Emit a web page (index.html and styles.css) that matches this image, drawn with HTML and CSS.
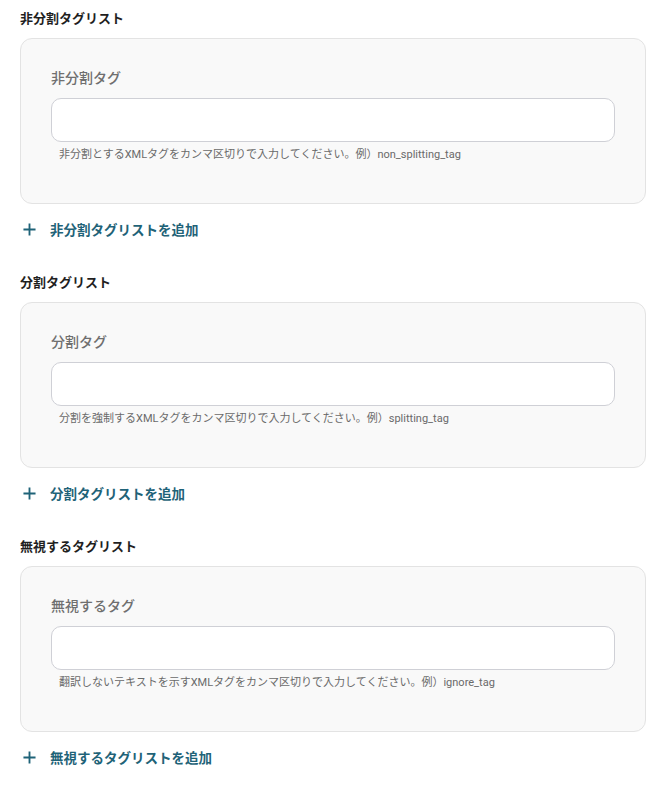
FILE: index.html
```html
<!DOCTYPE html>
<html lang="ja">
<head>
<meta charset="utf-8">
<title>タグリスト設定</title>
<link rel="stylesheet" href="styles.css">
</head>
<body>
<main class="page">
  <section class="group">
    <h2 class="group-title">非分割タグリスト</h2>
    <div class="card">
      <label class="field-label">非分割タグ</label>
      <input class="field-input" type="text">
      <p class="field-help">非分割とするXMLタグをカンマ区切りで入力してください。例）non_splitting_tag</p>
    </div>
    <button class="add-btn" type="button">
      <svg class="add-icon" viewBox="0 0 14 14" width="14" height="14"><path d="M7 0.5v13M0.5 7h13" stroke="currentColor" stroke-width="2" fill="none"/></svg>
      <span>非分割タグリストを追加</span>
    </button>
  </section>

  <section class="group">
    <h2 class="group-title">分割タグリスト</h2>
    <div class="card">
      <label class="field-label">分割タグ</label>
      <input class="field-input" type="text">
      <p class="field-help">分割を強制するXMLタグをカンマ区切りで入力してください。例）splitting_tag</p>
    </div>
    <button class="add-btn" type="button">
      <svg class="add-icon" viewBox="0 0 14 14" width="14" height="14"><path d="M7 0.5v13M0.5 7h13" stroke="currentColor" stroke-width="2" fill="none"/></svg>
      <span>分割タグリストを追加</span>
    </button>
  </section>

  <section class="group">
    <h2 class="group-title">無視するタグリスト</h2>
    <div class="card">
      <label class="field-label">無視するタグ</label>
      <input class="field-input" type="text">
      <p class="field-help">翻訳しないテキストを示すXMLタグをカンマ区切りで入力してください。例）ignore_tag</p>
    </div>
    <button class="add-btn" type="button">
      <svg class="add-icon" viewBox="0 0 14 14" width="14" height="14"><path d="M7 0.5v13M0.5 7h13" stroke="currentColor" stroke-width="2" fill="none"/></svg>
      <span>無視するタグリストを追加</span>
    </button>
  </section>
</main>
</body>
</html>
```

FILE: styles.css
```css
* {
  box-sizing: border-box;
}

html, body {
  margin: 0;
  padding: 0;
  background: #ffffff;
}

body {
  font-family: Roboto, "Noto Sans CJK JP", sans-serif;
  color: #222222;
}

.page {
  padding: 9px 16px 0 20px;
  display: flex;
  flex-direction: column;
  gap: 34px;
}

.group {
  display: flex;
  flex-direction: column;
}

.group-title {
  margin: 0 0 9px;
  font-size: 13px;
  line-height: 20px;
  font-weight: 700;
  color: #1f1f1f;
}

.card {
  display: flex;
  flex-direction: column;
  background: #f9f9f9;
  border: 1px solid #e3e3e3;
  border-radius: 12px;
  padding: 28px 30px 40px;
}

.field-label {
  font-size: 14px;
  line-height: 22px;
  font-weight: 500;
  color: #6f6f6f;
  margin-bottom: 9px;
}

.field-input {
  height: 44px;
  border: 1px solid #cfd0d6;
  border-radius: 10px;
  background: #ffffff;
  padding: 0 14px;
  font: inherit;
  font-size: 14px;
  outline: none;
}

.field-help {
  margin: 5px 0 0 8px;
  font-size: 11px;
  line-height: 16px;
  color: #6a6a6a;
}

.add-btn {
  margin-top: 15px;
  display: flex;
  align-items: center;
  gap: 14px;
  align-self: flex-start;
  height: 20px;
  padding: 0 0 0 3px;
  border: 0;
  background: none;
  font-family: inherit;
  font-size: 13.5px;
  font-weight: 700;
  color: #1f6378;
  cursor: pointer;
}

.add-icon {
  display: block;
  flex: none;
  width: 13px;
  height: 13px;
}
```
